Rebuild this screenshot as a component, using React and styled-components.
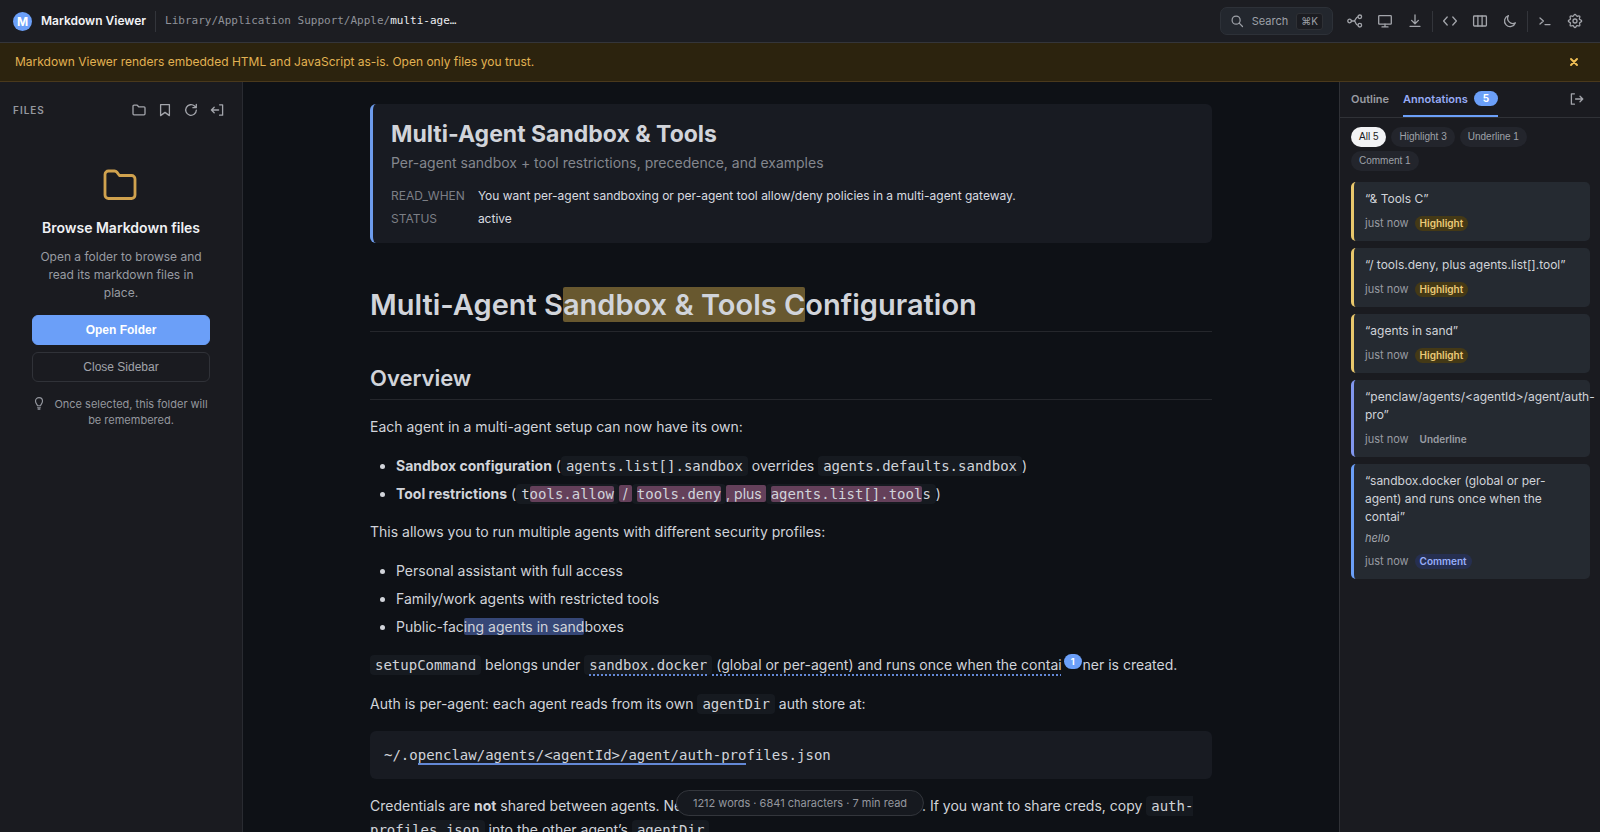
import React from "react";
import styled, { createGlobalStyle, css } from "styled-components";

const GlobalStyle = createGlobalStyle`
  *, *::before, *::after { box-sizing: border-box; }
  body {
    margin: 0;
    background: #0e1116;
    color: #d1d4da;
    font-family: Inter, "Liberation Sans", sans-serif;
    font-size: 14px;
    line-height: 24px;
  }
  button { font: inherit; color: inherit; cursor: pointer; }
  h1, h2, h3, p, ul, dl, dd, pre { margin: 0; padding: 0; }
`;

const mono = css`
  font-family: "DejaVu Sans Mono", "Liberation Mono", monospace;
`;

const buttonFont = css`
  font-family: "Liberation Sans", Arial, sans-serif;
`;

/* ---------- shell ---------- */

const Shell = styled.div`
  display: flex;
  flex-direction: column;
  height: 100vh;
  overflow: hidden;
`;

const Toolbar = styled.header`
  display: flex;
  align-items: center;
  height: 43px;
  flex: none;
  padding: 0 10px 0 13px;
  background: #1c1d22;
  border-bottom: 1px solid #34353a;
`;

const Logo = styled.span`
  display: flex;
  align-items: center;
  justify-content: center;
  width: 19px;
  height: 19px;
  border-radius: 50%;
  background: #6b9ff8;
  color: #fff;
  font-size: 12px;
  font-weight: 700;
  line-height: 19px;
`;

const AppName = styled.span`
  margin-left: 9px;
  color: #f1f2f5;
  font-size: 12px;
  font-weight: 600;
`;

const Divider = styled.span`
  width: 1px;
  height: 21px;
  margin: 0 ${(p) => p.$gap}px;
  background: #33353b;
`;

const Path = styled.span`
  ${mono}
  flex: 1;
  color: #8f9299;
  font-size: 11px;
  b { color: #eceef1; font-weight: 400; }
`;

const SearchButton = styled.button`
  display: flex;
  align-items: center;
  gap: 8px;
  height: 28px;
  margin-right: 7px;
  padding: 0 9px;
  border: 1px solid #2d3138;
  border-radius: 7px;
  background: #23272e;
  color: #9da0a7;
  font-size: 11px;
`;

const Kbd = styled.kbd`
  padding: 0 4px;
  border: 1px solid #2e3035;
  border-radius: 3px;
  background: #1b1c21;
  font-family: Inter, "DejaVu Sans", sans-serif;
  font-size: 10px;
  line-height: 15px;
`;

const IconButton = styled.button`
  display: grid;
  place-items: center;
  width: ${(p) => p.$size || 30}px;
  height: ${(p) => p.$size || 30}px;
  padding: 0;
  border: 0;
  background: none;
  color: #a3a5ab;
`;

const Banner = styled.div`
  display: flex;
  align-items: center;
  justify-content: space-between;
  height: 39px;
  flex: none;
  padding: 0 13px 1px 15px;
  background: #2c230e;
  border-bottom: 1px solid #4a391c;
  color: #e2b252;
  font-size: 12px;
`;

const DismissButton = styled(IconButton)`
  color: #f0bf55;
`;

const Body = styled.div`
  display: flex;
  flex: 1;
  min-height: 0;
`;

/* ---------- file sidebar ---------- */

const Sidebar = styled.aside`
  width: 243px;
  flex: none;
  background: #1a1b20;
  border-right: 1px solid #292b31;
`;

const SidebarHead = styled.div`
  display: flex;
  align-items: center;
  height: 56px;
  padding: 0 12px 0 13px;
`;

const SidebarLabel = styled.h2`
  flex: 1;
  color: #94979e;
  font-size: 10px;
  font-weight: 600;
  letter-spacing: 1px;
`;

const EmptyState = styled.div`
  display: flex;
  flex-direction: column;
  align-items: center;
  padding: 29px 32px 0;
  text-align: center;
`;

const EmptyTitle = styled.h3`
  margin-top: 13px;
  color: #f0f1f4;
  font-size: 14px;
  font-weight: 600;
  white-space: nowrap;
`;

const EmptyText = styled.p`
  margin: 8px 0 13px;
  padding: 0 7px;
  color: #989ba2;
  font-size: 12px;
  line-height: 18px;
`;

const PanelButton = styled.button`
  ${buttonFont}
  width: 100%;
  height: 30px;
  margin-bottom: 7px;
  border: 1px solid ${(p) => (p.$primary ? "#6b9ff8" : "#303238")};
  border-radius: 6px;
  background: ${(p) => (p.$primary ? "#6b9ff8" : "transparent")};
  color: ${(p) => (p.$primary ? "#fff" : "#a1a3aa")};
  font-size: 12px;
  font-weight: ${(p) => (p.$primary ? 700 : 400)};
  line-height: 16px;
`;

const Hint = styled.div`
  display: flex;
  gap: 6px;
  margin-top: 7px;
  color: #94979e;
  font-size: 11px;
  line-height: 16px;
  svg { flex: none; }
`;

/* ---------- document ---------- */

const Main = styled.main`
  flex: 1;
  min-width: 0;
  overflow: hidden;
  padding: 22px 24px 0;
`;

const Article = styled.article`
  max-width: 842px;
  margin: 0 auto;
`;

const MetaCard = styled.section`
  padding: 16px 18px 13px;
  margin-bottom: 44px;
  border-left: 3px solid #6d9cec;
  border-radius: 6px;
  background: #181b22;
`;

const MetaTitle = styled.h2`
  font-size: 23px;
  font-weight: 700;
  line-height: 28px;
`;

const MetaSubtitle = styled.p`
  margin: 3px 0 9px;
  color: #84878e;
  font-size: 14px;
`;

const MetaList = styled.dl`
  display: grid;
  grid-template-columns: max-content 1fr;
  column-gap: 13px;
  font-size: 12px;
  line-height: 23px;
  dt { color: #7c7f86; }
  dd { color: #d9dbe0; }
`;

const Heading1 = styled.h1`
  padding-bottom: 8px;
  margin-bottom: 32px;
  border-bottom: 1px solid #25272c;
  font-size: 29px;
  font-weight: 600;
  line-height: 36px;
`;

const Heading2 = styled.h2`
  padding-bottom: 7px;
  margin-bottom: 15px;
  border-bottom: 1px solid #25272c;
  font-size: 22px;
  font-weight: 600;
  line-height: 28px;
`;

const Paragraph = styled.p`
  margin-bottom: 15px;
`;

const List = styled.ul`
  margin-bottom: 14px;
  padding-left: 26px;
  li + li { margin-top: 4px; }
`;

const Code = styled.code`
  ${mono}
  padding: 2px 5px;
  border-radius: 4px;
  background: #161a20;
  font-size: 14px;
  line-height: 16px;
`;

const CodeBlock = styled.pre`
  ${mono}
  margin-bottom: 15px;
  padding: 12px 14px;
  border-radius: 6px;
  background: #181b22;
  font-size: 14px;
`;

const markColors = { gold: "#68582f", pink: "#64405a", blue: "#364777" };

const Mark = styled.mark`
  border-radius: 2px;
  background: ${(p) => markColors[p.$tone]};
  color: inherit;
`;

const Underlined = styled.u`
  text-decoration: none;
  border-bottom: 2px solid #6388d6;
`;

const Commented = styled.u`
  text-decoration: underline dotted 2px #6388d6;
  text-underline-offset: 4px;
`;

const CommentBadge = styled.sup`
  margin: 0 1px 0 2px;
  padding: 2px 7px;
  border-radius: 8px;
  background: #6b9ff8;
  color: #fff;
  font-size: 9px;
  font-weight: 700;
  line-height: 0;
  vertical-align: 5px;
`;

const StatusPill = styled.div`
  position: fixed;
  bottom: 16px;
  left: 50%;
  transform: translateX(-50%);
  padding: 0 16px;
  border: 1px solid #33363c;
  border-radius: 13px;
  background: #16191f;
  color: #94979e;
  font-size: 11px;
  line-height: 24px;
  white-space: nowrap;
`;

/* ---------- annotations ---------- */

const Inspector = styled.aside`
  width: 261px;
  flex: none;
  background: #1a1b20;
  border-left: 1px solid #2f3136;
`;

const Tabs = styled.div`
  display: flex;
  align-items: stretch;
  gap: 14px;
  height: 36px;
  padding: 0 6px 0 11px;
  border-bottom: 1px solid #303237;
`;

const Tab = styled.button`
  display: flex;
  align-items: center;
  gap: 6px;
  padding: 0;
  border: 0;
  border-bottom: 2px solid ${(p) => (p.$active ? "#6b9ff8" : "transparent")};
  background: none;
  color: ${(p) => (p.$active ? "#97abf6" : "#9a9da4")};
  font-size: 11px;
  font-weight: 600;
`;

const Count = styled.span`
  padding: 0 9px;
  border-radius: 8px;
  background: #6b9ff8;
  color: #fff;
  font-size: 10px;
  font-weight: 700;
  line-height: 15px;
`;

const TabSpacer = styled.span`
  flex: 1;
`;

const Filters = styled.div`
  display: flex;
  flex-wrap: wrap;
  gap: 4px 5px;
  padding: 9px 11px 11px;
`;

const Filter = styled.button`
  ${buttonFont}
  height: 20px;
  padding: 0 8px;
  border: 0;
  border-radius: 10px;
  background: ${(p) => (p.$active ? "#f2f3f5" : "#23252c")};
  color: ${(p) => (p.$active ? "#1a1b20" : "#9ea1a8")};
  font-size: 10px;
  line-height: 20px;
`;

const Notes = styled.div`
  display: flex;
  flex-direction: column;
  gap: 7px;
  padding: 0 10px 0 11px;
`;

const Note = styled.section`
  padding: 8px 0 10px 11px;
  border-left: 3px solid ${(p) => p.$edge};
  border-radius: 5px;
  background: #252a31;
`;

const Quote = styled.p`
  padding-right: 11px;
  color: #d0d3d9;
  font-size: 12px;
  line-height: 18px;
`;

const Remark = styled.p`
  margin-top: 4px;
  color: #a3a6ad;
  font-size: 11px;
  font-style: italic;
  line-height: 16px;
`;

const NoteMeta = styled.div`
  display: flex;
  align-items: center;
  gap: 6px;
  margin-top: 8px;
  color: #989ba2;
  font-size: 11px;
  line-height: 15px;
`;

const tagStyles = {
  Highlight: { bg: "#443916", fg: "#eccb78" },
  Underline: { bg: "transparent", fg: "#9a9da4" },
  Comment: { bg: "#262f50", fg: "#98aefa" },
};

const Tag = styled.span`
  padding: 0 5px;
  border-radius: 8px;
  background: ${(p) => tagStyles[p.$kind].bg};
  color: ${(p) => tagStyles[p.$kind].fg};
  font-size: 10px;
  font-weight: 600;
`;

/* ---------- icons ---------- */

const Icon = ({ size = 16, stroke = 1.3, box = 16, children }) => (
  <svg
    width={size}
    height={size}
    viewBox={`0 0 ${box} ${box}`}
    fill="none"
    stroke="currentColor"
    strokeWidth={stroke}
    strokeLinecap="round"
    strokeLinejoin="round"
    aria-hidden="true"
  >
    {children}
  </svg>
);

const icons = {
  search: <><circle cx="7" cy="7" r="4.6" /><path d="M10.5 10.5L14.3 14.3" /></>,
  graph: (
    <>
      <circle cx="2.600" cy="8" r="1.800" />
      <circle cx="12.800" cy="3.800" r="1.800" />
      <circle cx="12.800" cy="12.200" r="1.800" />
      <path d="M4.400 8H7M7 8C9 8 8.400 3.800 11 3.800M7 8C9 8 8.400 12.200 11 12.200" />
    </>
  ),
  display: <><rect x="1.7" y="2.6" width="12.6" height="8.6" rx="0.8" /><path d="M8 11.2v2.6M5 13.9h6" /></>,
  download: <path d="M8 2v8.6M4.6 7.4L8 10.8l3.4-3.4M3 13.3h10" />,
  code: <path d="M5.2 4L1.6 8l3.6 4M10.8 4l3.6 4-3.6 4" />,
  columns: <><rect x="1.6" y="3" width="12.8" height="10" rx="0.8" /><path d="M5.9 3v10M10.1 3v10" /></>,
  moon: <path d="M6.4 2.6a5.6 5.6 0 1 0 7 7.2A5.2 5.2 0 0 1 6.4 2.6z" />,
  terminal: <path d="M3 5l3.4 3L3 11M8 11.6h5" />,
  gear: (
    <>
      <circle cx="8" cy="8" r="2" />
      <path d="M8 1.300C9 1.300 9.100 2.900 9.900 3.200S11.900 2.400 12.700 3.200 11.900 5.400 12.400 6.200 14.700 7 14.700 8 13.100 9.100 12.600 9.900 13.500 12 12.700 12.700 10.700 12.400 9.900 12.700 9 14.700 8 14.700 6.900 13.100 6.100 12.700 4 13.500 3.300 12.700 3.800 10.700 3.400 9.900 1.300 9 1.300 8 3 6.900 3.400 6.200 2.500 4 3.300 3.200 5.300 3.600 6.100 3.200 7 1.300 8 1.300z" />
    </>
  ),
  folder: <path d="M2 4.200A1 1 0 0 1 3 3.200h3.200l1.500 1.600H13a1 1 0 0 1 1 1v6a1 1 0 0 1-1 1H3a1 1 0 0 1-1-1z" />,
  bookmark: <path d="M3.600 2.600h8.800v11L8 10.400l-4.400 3.200z" />,
  refresh: <path d="M13.300 8.200a5.300 5.300 0 1 1-1.700-4.100L13 5.400M13.300 2.300v3.400H9.900" />,
  collapseLeft: <path d="M10.600 2.800h3v10.400h-3M9.600 8H2.400M5.200 5.200L2.400 8l2.800 2.800" />,
  collapseRight: <path d="M5.400 2.800h-3v10.400h3M6.600 8h7.200M11 5.200L13.800 8 11 10.800" />,
  bulb: <path d="M6.200 11.200C6.200 9.600 4 8.600 4 5.800a4 4 0 0 1 8 0c0 2.800-2.200 3.800-2.200 5.400zM6.400 13.400h3.200M7 15h2" />,
  close: <path d="M4 4l8 8M12 4l-8 8" />,
};

const FolderGlyph = styled.svg`
  width: 36px;
  height: 36px;
  color: #d0a24e;
`;

const EmptyFolder = () => (
  <FolderGlyph viewBox="0 0 36 36" fill="none" stroke="currentColor" strokeWidth="2.8" strokeLinejoin="round" aria-hidden="true">
    <path d="M2 7.500A3.500 3.500 0 0 1 5.500 4h6a3 3 0 0 1 2.400 1.200L16.400 8.500h12.100A3.500 3.500 0 0 1 32 12v16a3.500 3.500 0 0 1-3.500 3.500h-23A3.500 3.500 0 0 1 2 28z" />
  </FolderGlyph>
);

const toolGroups = [
  [["graph", "Graph"], ["display", "Present"], ["download", "Export"]],
  [["code", "Source"], ["columns", "Width"], ["moon", "Theme"]],
  [["terminal", "Terminal"], ["gear", "Settings"]],
];

const sidebarTools = [
  ["folder", "Open folder"],
  ["bookmark", "Bookmarks"],
  ["refresh", "Refresh"],
  ["collapseLeft", "Collapse files"],
];

const filters = ["All 5", "Highlight 3", "Underline 1", "Comment 1"];

const notes = [
  { kind: "Highlight", edge: "#e8c76c", quote: "& Tools C" },
  { kind: "Highlight", edge: "#e8c76c", quote: "/ tools.deny, plus agents.list[].tool" },
  { kind: "Highlight", edge: "#e8c76c", quote: "agents in sand" },
  { kind: "Underline", edge: "#8197ee", quote: "penclaw/agents/<agentId>/agent/auth-pro" },
  {
    kind: "Comment",
    edge: "#6b9ff8",
    quote: "sandbox.docker (global or per-agent) and runs once when the contai",
    remark: "hello",
  },
];

export default function App() {
  return (
    <Shell>
      <GlobalStyle />
      <Toolbar>
        <Logo>M</Logo>
        <AppName>Markdown Viewer</AppName>
        <Divider $gap={9} />
        <Path>Library/Application Support/Apple/<b>multi-age…</b></Path>
        <SearchButton>
          <Icon size={14} stroke={1.4}>{icons.search}</Icon>
          Search
          <Kbd>⌘K</Kbd>
        </SearchButton>
        {toolGroups.map((group, i) => (
          <React.Fragment key={i}>
            {i > 0 && <Divider $gap={2} />}
            {group.map(([name, label]) => (
              <IconButton key={name} aria-label={label}>
                <Icon>{icons[name]}</Icon>
              </IconButton>
            ))}
          </React.Fragment>
        ))}
      </Toolbar>

      <Banner role="status">
        Markdown Viewer renders embedded HTML and JavaScript as-is. Open only files you trust.
        <DismissButton $size={26} aria-label="Dismiss">
          <Icon size={12} stroke={2.6}>{icons.close}</Icon>
        </DismissButton>
      </Banner>

      <Body>
        <Sidebar>
          <SidebarHead>
            <SidebarLabel>FILES</SidebarLabel>
            {sidebarTools.map(([name, label]) => (
              <IconButton key={name} $size={26} aria-label={label}>
                <Icon>{icons[name]}</Icon>
              </IconButton>
            ))}
          </SidebarHead>
          <EmptyState>
            <EmptyFolder />
            <EmptyTitle>Browse Markdown files</EmptyTitle>
            <EmptyText>Open a folder to browse and read its markdown files in place.</EmptyText>
            <PanelButton $primary>Open Folder</PanelButton>
            <PanelButton>Close Sidebar</PanelButton>
            <Hint>
              <Icon size={14}>{icons.bulb}</Icon>
              <span>Once selected, this folder will be remembered.</span>
            </Hint>
          </EmptyState>
        </Sidebar>

        <Main>
          <Article>
            <MetaCard>
              <MetaTitle>Multi-Agent Sandbox &amp; Tools</MetaTitle>
              <MetaSubtitle>Per-agent sandbox + tool restrictions, precedence, and examples</MetaSubtitle>
              <MetaList>
                <dt>READ_WHEN</dt>
                <dd>You want per-agent sandboxing or per-agent tool allow/deny policies in a multi-agent gateway.</dd>
                <dt>STATUS</dt>
                <dd>active</dd>
              </MetaList>
            </MetaCard>

            <Heading1>
              Multi-Agent S<Mark $tone="gold">andbox &amp; Tools C</Mark>onfiguration
            </Heading1>
            <Heading2>Overview</Heading2>
            <Paragraph>Each agent in a multi-agent setup can now have its own:</Paragraph>
            <List>
              <li>
                <strong>Sandbox configuration</strong> (<Code>agents.list[].sandbox</Code> overrides{" "}
                <Code>agents.defaults.sandbox</Code>)
              </li>
              <li>
                <strong>Tool restrictions</strong> (<Code>t<Mark $tone="pink">ools.allow</Mark></Code>
                <Mark $tone="pink"> / </Mark>
                <Code><Mark $tone="pink">tools.deny</Mark></Code>
                <Mark $tone="pink">, plus </Mark>
                <Code><Mark $tone="pink">agents.list[].tool</Mark>s</Code>)
              </li>
            </List>
            <Paragraph>This allows you to run multiple agents with different security profiles:</Paragraph>
            <List>
              <li>Personal assistant with full access</li>
              <li>Family/work agents with restricted tools</li>
              <li>Public-fac<Mark $tone="blue">ing agents in sand</Mark>boxes</li>
            </List>
            <Paragraph>
              <Code>setupCommand</Code> belongs under{" "}
              <Code><Commented>sandbox.docker</Commented></Code>
              <Commented> (global or per-agent) and runs once when the contai</Commented>
              <CommentBadge>1</CommentBadge>ner is created.
            </Paragraph>
            <Paragraph>
              Auth is per-agent: each agent reads from its own <Code>agentDir</Code> auth store at:
            </Paragraph>
            <CodeBlock>
              ~/.o<Underlined>penclaw/agents/&lt;agentId&gt;/agent/auth-pro</Underlined>files.json
            </CodeBlock>
            <Paragraph>
              Credentials are <strong>not</strong> shared between agents. Never reuse{" "}
              <Code>agentDir</Code> across agents. If you want to share creds, copy{" "}
              <Code>auth-profiles.json</Code> into the other agent’s <Code>agentDir</Code>.
            </Paragraph>
          </Article>
        </Main>

        <Inspector>
          <Tabs>
            <Tab>Outline</Tab>
            <Tab $active>Annotations <Count>5</Count></Tab>
            <TabSpacer />
            <IconButton $size={34} aria-label="Collapse annotations">
              <Icon>{icons.collapseRight}</Icon>
            </IconButton>
          </Tabs>
          <Filters>
            {filters.map((label, i) => (
              <Filter key={label} $active={i === 0}>{label}</Filter>
            ))}
          </Filters>
          <Notes>
            {notes.map((note) => (
              <Note key={note.quote} $edge={note.edge}>
                <Quote>{`“${note.quote}”`}</Quote>
                {note.remark && <Remark>{note.remark}</Remark>}
                <NoteMeta>
                  just now <Tag $kind={note.kind}>{note.kind}</Tag>
                </NoteMeta>
              </Note>
            ))}
          </Notes>
        </Inspector>
      </Body>

      <StatusPill>1212 words · 6841 characters · 7 min read</StatusPill>
    </Shell>
  );
}
